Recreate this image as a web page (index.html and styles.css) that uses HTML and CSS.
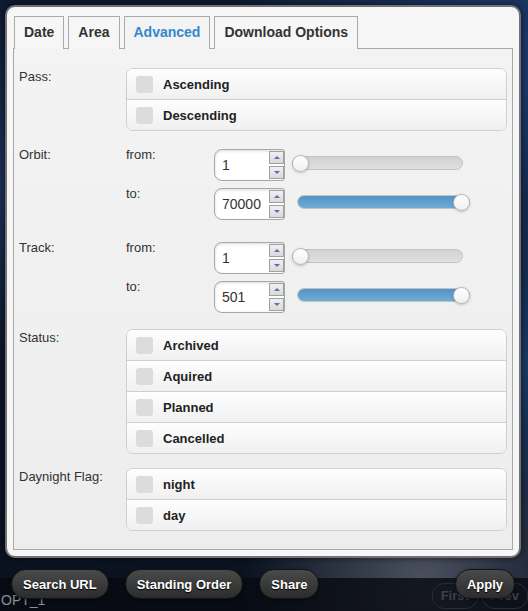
FILE: index.html
```html
<!DOCTYPE html>
<html>
<head>
<meta charset="utf-8">
<link rel="stylesheet" href="styles.css">
</head>
<body>
<div class="map">
  <div class="panel">
    <ul class="tabs">
      <li class="tab">Date</li>
      <li class="tab">Area</li>
      <li class="tab active">Advanced</li>
      <li class="tab">Download Options</li>
    </ul>
    <div class="content">
      <div class="section">
        <div class="label">Pass:</div>
        <div class="group">
          <div class="opt"><span class="box"></span>Ascending</div>
          <div class="opt"><span class="box"></span>Descending</div>
        </div>
      </div>

      <div class="section sec-orbit">
        <div class="label lift">Orbit:</div>
        <div class="ranges">
          <div class="rrow">
            <div class="sublabel">from:</div>
            <div class="spinner"><span class="val">1</span><span class="spin"><span class="sb"><i class="tri-up"></i></span><span class="sb"><i class="tri-down"></i></span></span></div>
            <div class="slider s-from"><span class="handle h-left"></span></div>
          </div>
          <div class="rrow">
            <div class="sublabel">to:</div>
            <div class="spinner"><span class="val">70000</span><span class="spin"><span class="sb"><i class="tri-up"></i></span><span class="sb"><i class="tri-down"></i></span></span></div>
            <div class="slider s-to"><span class="fill"></span><span class="handle h-right"></span></div>
          </div>
        </div>
      </div>

      <div class="section sec-track">
        <div class="label lift">Track:</div>
        <div class="ranges">
          <div class="rrow">
            <div class="sublabel">from:</div>
            <div class="spinner"><span class="val">1</span><span class="spin"><span class="sb"><i class="tri-up"></i></span><span class="sb"><i class="tri-down"></i></span></span></div>
            <div class="slider s-from"><span class="handle h-left"></span></div>
          </div>
          <div class="rrow">
            <div class="sublabel">to:</div>
            <div class="spinner"><span class="val">501</span><span class="spin"><span class="sb"><i class="tri-up"></i></span><span class="sb"><i class="tri-down"></i></span></span></div>
            <div class="slider s-to"><span class="fill"></span><span class="handle h-right"></span></div>
          </div>
        </div>
      </div>

      <div class="section sec-status">
        <div class="label">Status:</div>
        <div class="group">
          <div class="opt"><span class="box"></span>Archived</div>
          <div class="opt"><span class="box"></span>Aquired</div>
          <div class="opt"><span class="box"></span>Planned</div>
          <div class="opt"><span class="box"></span>Cancelled</div>
        </div>
      </div>

      <div class="section sec-day">
        <div class="label">Daynight Flag:</div>
        <div class="group">
          <div class="opt"><span class="box"></span>night</div>
          <div class="opt"><span class="box"></span>day</div>
        </div>
      </div>
    </div>
  </div>

  <div class="mapbar">
    <span class="opt-name">OPT_1</span>
    <span class="pager"><span class="pg">First</span><span class="pg">Prev</span></span>
  </div>

  <div class="actions">
    <button class="btn">Search URL</button>
    <button class="btn">Standing Order</button>
    <button class="btn">Share</button>
    <span class="spacer"></span>
    <button class="btn">Apply</button>
  </div>
</div>
</body>
</html>
```

FILE: styles.css
```css
* { box-sizing: border-box; }
html, body { margin: 0; padding: 0; }
body {
  width: 528px;
  height: 611px;
  overflow: hidden;
  font-family: "Liberation Sans", Arial, sans-serif;
  background: #0c1424;
}
.map {
  position: relative;
  width: 528px;
  height: 611px;
  overflow: hidden;
  padding: 5px 7px 0 5px;
  background:
    radial-gradient(ellipse at 95% 10%, #1d3a6e 0%, rgba(20,40,80,0) 40%),
    radial-gradient(ellipse at 100% 60%, #1a3a66 0%, rgba(20,40,80,0) 35%),
    radial-gradient(ellipse at 0% 30%, #1b3058 0%, rgba(20,40,80,0) 30%),
    radial-gradient(ellipse at 80% 95%, #4a5060 0%, rgba(60,60,70,0) 30%),
    linear-gradient(#0f1a30, #0a1220);
}
.panel {
  width: 516px;
  background: #f6f6f6;
  border: 2px solid #727272;
  border-radius: 10px;
  padding: 9px 6px 6px 6px;
  box-shadow: 0 0 6px rgba(0,0,0,0.6);
}
.tabs {
  list-style: none;
  margin: 0 0 0 1px;
  padding: 0;
  display: flex;
  gap: 4px;
  position: relative;
  z-index: 1;
}
.tab {
  height: 33px;
  padding: 0 9px;
  line-height: 31px;
  font-size: 14px;
  font-weight: bold;
  color: #333;
  border: 1px solid #aaa;
  border-bottom: none;
  background: #f6f6f6;
  margin-bottom: -1px;
}
.tab.active {
  color: #3388cc;
  background: #f3f3f3;
}
.content {
  border: 1px solid #a9a9a9;
  background: linear-gradient(#f3f3f3, #ededed);
  padding: 19px 5px 18px 5px;
}
.section {
  display: grid;
  grid-template-columns: 107px 1fr;
  align-items: start;
}
.sec-orbit { margin-top: 18px; }
.sec-track { margin-top: 22px; }
.sec-status { margin-top: 16px; }
.sec-day { margin-top: 14px; }
.label {
  font-size: 13px;
  line-height: 16px;
  color: #333;
  padding-top: 1px;
}
.label.lift { margin-top: -2px; padding-top: 0; }
.group {
  border: 1px solid #cfcfcf;
  border-radius: 7px;
  overflow: hidden;
  background: #fff;
}
.opt {
  height: 31px;
  display: flex;
  align-items: center;
  padding-left: 9px;
  font-size: 13px;
  font-weight: bold;
  color: #222;
  background: linear-gradient(#fefefe, #f0f0f0);
  border-top: 1px solid #cfcfcf;
}
.opt:first-child { border-top: none; height: 30px; }
.box {
  width: 17px;
  height: 17px;
  border-radius: 3px;
  background: #dcdcdc;
  margin-right: 10px;
}
.ranges {
  display: flex;
  flex-direction: column;
  gap: 7px;
}
.rrow {
  display: flex;
  align-items: flex-start;
}
.sublabel {
  width: 88px;
  font-size: 13px;
  line-height: 16px;
  color: #333;
  margin-top: -2px;
}
.spinner {
  width: 71px;
  height: 32px;
  border: 1px solid #a8a8a8;
  border-radius: 8px 3px 3px 8px;
  background: #fff;
  box-shadow: inset 0 1px 3px rgba(0,0,0,0.15);
  display: flex;
  align-items: center;
  justify-content: space-between;
  padding: 0 0 0 7px;
}
.val {
  font-size: 14px;
  color: #333;
}
.spin {
  display: flex;
  flex-direction: column;
  gap: 2px;
  width: 15px;
}
.sb {
  height: 13px;
  border: 1px solid #a0a0a0;
  background: linear-gradient(#f0f0f0, #dadada);
  display: flex;
  align-items: center;
  justify-content: center;
}
.tri-up {
  width: 0; height: 0;
  border-left: 3px solid transparent;
  border-right: 3px solid transparent;
  border-bottom: 3px solid #5a6fb8;
}
.tri-down {
  width: 0; height: 0;
  border-left: 3px solid transparent;
  border-right: 3px solid transparent;
  border-top: 3px solid #5a6fb8;
}
.slider {
  position: relative;
  height: 14px;
  margin-top: 7px;
  border: 1px solid #c2c2c2;
  border-radius: 7px;
  background: linear-gradient(#d2d2d2, #e0e0e0);
}
.s-from { margin-left: 7px; width: 171px; }
.s-to { margin-left: 12px; width: 173px; }
.fill {
  display: block;
  height: 100%;
  border-radius: 7px;
  background: linear-gradient(#5393c5, #6facd5);
}
.handle {
  position: absolute;
  top: -2px;
  width: 17px;
  height: 17px;
  border-radius: 50%;
  background: linear-gradient(#ffffff, #f0f0f0);
  border: 1px solid #b5b5b5;
  box-shadow: 0 1px 3px rgba(0,0,0,0.2);
}
.h-left { left: -1px; }
.h-right { right: -1px; }

.mapbar {
  position: absolute;
  left: 0;
  right: 0;
  bottom: 0;
  height: 33px;
  background: rgba(8, 10, 16, 0.8);
  display: flex;
  align-items: flex-end;
  justify-content: space-between;
  padding: 0 0 2px 1px;
}
.opt-name {
  font-size: 14px;
  color: #8a8f99;
  line-height: 18px;
}
.pager { display: flex; gap: 4px; }
.pg {
  font-size: 13px;
  font-weight: bold;
  color: #3d4048;
  border: 1px solid #2a2d33;
  border-radius: 12px;
  padding: 3px 8px;
  line-height: 18px;
}
.actions {
  position: absolute;
  left: 11px;
  right: 13px;
  top: 569px;
  display: flex;
  gap: 16px;
}
.spacer { flex: 1; }
.btn {
  height: 30px;
  padding: 0 11px;
  border: 1px solid #141414;
  border-radius: 15px;
  background: linear-gradient(#4a4a4a, #2c2c2c);
  color: #fff;
  font-family: "Liberation Sans", Arial, sans-serif;
  font-size: 13px;
  font-weight: bold;
  text-shadow: 0 1px 1px #000;
  box-shadow: 0 1px 3px rgba(0,0,0,0.5);
}
```
